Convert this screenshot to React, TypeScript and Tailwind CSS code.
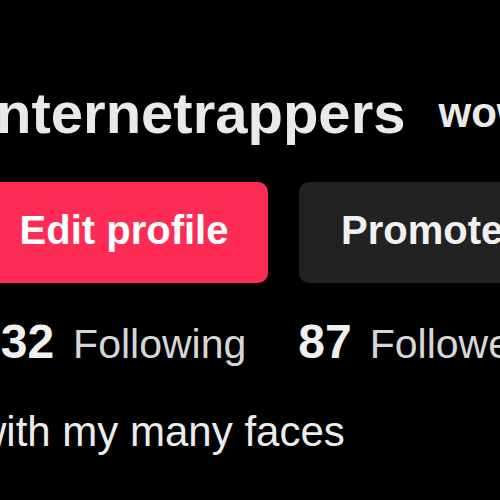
const App = () => {
  return (
    <div
      className="w-[500px] h-[500px] bg-black overflow-hidden"
      style={{ fontFamily: '"Liberation Sans", Arial, sans-serif' }}
    >
      <div className="ml-[-20px] pt-[79px] flex flex-col w-[700px]">
        <div className="flex items-center h-[68px] gap-[33px]">
          <h1 className="text-[58px] leading-[68px] font-bold text-[#e9e9e9] whitespace-nowrap">
            internetrappers
          </h1>
          <h2 className="text-[42px] leading-[48px] font-bold text-[#e9e9e9] whitespace-nowrap">
            wowie
          </h2>
        </div>

        <div className="flex gap-[31px] mt-[35px]">
          <button className="w-[288px] h-[101px] rounded-[10px] bg-[#fe2c55] text-white text-[40px] font-bold flex items-center justify-center pb-[5px]">
            Edit profile
          </button>
          <button className="h-[101px] rounded-[10px] bg-[#222222] text-[#f1f1f1] text-[40px] font-bold flex items-center px-[42px] pb-[5px] whitespace-nowrap">
            Promote post
          </button>
        </div>

        <div className="flex items-baseline mt-[32px] leading-[53px] ml-[-6px] whitespace-nowrap">
          <span className="text-[48px] font-bold text-[#f0f0f0]">132</span>
          <span className="text-[41px] text-[#d6d6d6] ml-[19px]">Following</span>
          <span className="text-[48px] font-bold text-[#f0f0f0] ml-[52px]">87</span>
          <span className="text-[41px] text-[#d6d6d6] ml-[18px]">Followers</span>
        </div>

        <p className="mt-[37px] ml-[-4px] text-[42px] leading-[48px] text-[#ececec] whitespace-nowrap">
          with my many faces
        </p>
      </div>
    </div>
  );
};

export default App;
